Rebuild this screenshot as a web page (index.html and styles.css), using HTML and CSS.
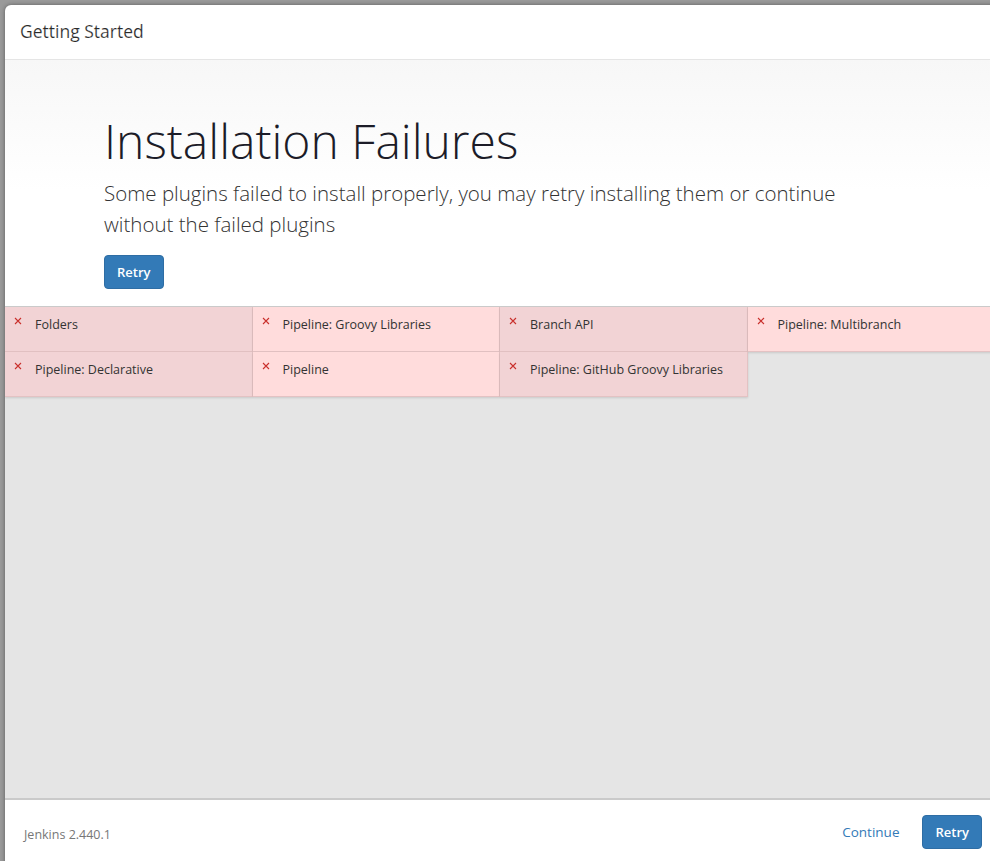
FILE: index.html
```html
<!DOCTYPE html>
<html lang="en">
<head>
  <meta charset="utf-8">
  <meta name="viewport" content="width=device-width, initial-scale=1">
  <title>Getting Started</title>
  <link rel="stylesheet" href="styles.css">
</head>
<body>
  <div class="modal">
    <header class="modal-header">
      <h4 class="modal-title">Getting Started</h4>
    </header>

    <div class="modal-body">
      <div class="jumbotron">
        <h1>Installation Failures</h1>
        <p>Some plugins failed to install properly, you may retry installing them or continue without the failed plugins</p>
        <button class="btn btn-primary" type="button">Retry</button>
      </div>

      <div class="plugins">
        <div class="plugin"><svg class="fail" viewBox="0 0 8 8"><path d="M1 1l6 6M7 1l-6 6"/></svg>Folders</div>
        <div class="plugin"><svg class="fail" viewBox="0 0 8 8"><path d="M1 1l6 6M7 1l-6 6"/></svg>Pipeline: Groovy Libraries</div>
        <div class="plugin"><svg class="fail" viewBox="0 0 8 8"><path d="M1 1l6 6M7 1l-6 6"/></svg>Branch API</div>
        <div class="plugin"><svg class="fail" viewBox="0 0 8 8"><path d="M1 1l6 6M7 1l-6 6"/></svg>Pipeline: Multibranch</div>
        <div class="plugin"><svg class="fail" viewBox="0 0 8 8"><path d="M1 1l6 6M7 1l-6 6"/></svg>Pipeline: Declarative</div>
        <div class="plugin"><svg class="fail" viewBox="0 0 8 8"><path d="M1 1l6 6M7 1l-6 6"/></svg>Pipeline</div>
        <div class="plugin"><svg class="fail" viewBox="0 0 8 8"><path d="M1 1l6 6M7 1l-6 6"/></svg>Pipeline: GitHub Groovy Libraries</div>
      </div>
    </div>

    <footer class="modal-footer">
      <span class="version">Jenkins 2.440.1</span>
      <div class="actions">
        <a href="#" class="btn btn-link">Continue</a>
        <button class="btn btn-primary" type="button">Retry</button>
      </div>
    </footer>
  </div>
</body>
</html>
```

FILE: styles.css
```css
html,
body {
  height: 100%;
}
body {
  margin: 0;
  overflow: hidden;
  background-color: #9a9a9a;
  font-family: "Open Sans", "Noto Sans", sans-serif;
  font-size: 14px;
  color: #333;
}

.modal {
  display: flex;
  flex-direction: column;
  width: 990px;
  height: 859px;
  margin: 5px 0 0 5px;
  background-color: #fff;
  border-top-left-radius: 6px;
  box-shadow: 0 0 4px rgba(0,0,0,.4);
  overflow: hidden;
}

.modal-header {
  padding: 14px 15px 15px;
  border-bottom: 1px solid #e5e5e5;
}
.modal-title {
  margin: 0;
  font-size: 17.5px;
  font-weight: 400;
  line-height: 25px;
  color: #2a2a2a;
  -webkit-text-stroke: .15px #fff;
}

.modal-body {
  flex: 1;
  display: flex;
  flex-direction: column;
  background-color: #e5e5e5;
}

.jumbotron {
  padding: 52px 60px 17px 99px;
  background: linear-gradient(to bottom, #f7f7f7 0, #fff 130px);
}
.jumbotron h1 {
  margin: 0 0 8px;
  font-size: 48px;
  font-weight: 300;
  line-height: 58px;
  color: #1c1c28;
}
.jumbotron p {
  max-width: 760px;
  margin: 0 0 15px;
  font-size: 20.5px;
  font-weight: 300;
  line-height: 31px;
  color: #333;
}

.btn {
  display: inline-block;
  padding: 6px 12px;
  font-family: inherit;
  font-size: 13px;
  line-height: 20px;
  border: 1px solid transparent;
  border-radius: 4px;
  text-decoration: none;
  cursor: pointer;
}
.btn-primary {
  color: #fff;
  font-weight: 600;
  background-color: #337ab7;
  border-color: #2e6da4;
}
.btn-link {
  font-size: 13.5px;
  color: #337ab7;
  background: none;
}

.plugins {
  display: flex;
  flex-wrap: wrap;
  border-top: 1px solid #ccc;
}
.plugin {
  display: flex;
  align-items: flex-start;
  box-sizing: border-box;
  width: 25%;
  height: 45px;
  padding: 9px 10px 9px 9px;
  font-size: 12.5px;
  line-height: 18px;
  color: #333;
  background-color: #ffdcdc;
  border-right: 1px solid #e3c2c3;
  border-bottom: 1px solid #e3c2c3;
  box-shadow: 0 1px 2px rgba(0,0,0,.12);
}
.plugin:nth-child(odd) {
  background-color: #f2d3d5;
}
.fail {
  flex: none;
  width: 8px;
  height: 8px;
  margin: 1px 13px 0 0;
  fill: none;
  stroke: #c9302c;
  stroke-width: 1.1;
}

.modal-footer {
  display: flex;
  align-items: flex-start;
  justify-content: space-between;
  padding: 15px 13px 15px 19px;
  border-top: 2px solid #cacaca;
}
.version {
  margin-top: 11px;
  font-size: 12.5px;
  color: #777;
}
.actions {
  display: flex;
  gap: 10px;
}
```
